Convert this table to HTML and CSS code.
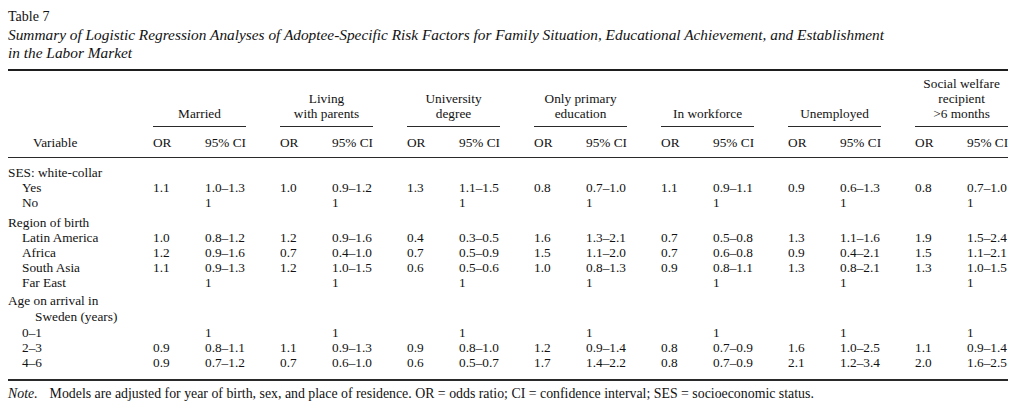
FILE: index.html
```html
<!DOCTYPE html>
<html lang="en">
<head>
<meta charset="utf-8">
<title>Table 7</title>
<link rel="stylesheet" href="styles.css">
</head>
<body>
<div class="page">
  <p class="tnum">Table 7</p>
  <p class="caption">Summary of Logistic Regression Analyses of Adoptee-Specific Risk Factors for Family Situation, Educational Achievement, and Establishment<br>in the Labor Market</p>
  <table class="data">
    <colgroup>
      <col class="c-var">
      <col class="c-or"><col class="c-ci">
      <col class="c-or"><col class="c-ci">
      <col class="c-or"><col class="c-ci">
      <col class="c-or"><col class="c-ci">
      <col class="c-or"><col class="c-ci">
      <col class="c-or"><col class="c-ci">
      <col class="c-or"><col class="c-ci-last">
    </colgroup>
    <thead>
      <tr class="groups">
        <th></th>
        <th colspan="2"><span class="grp-label">Married</span></th>
        <th colspan="2"><span class="grp-label">Living<br>with parents</span></th>
        <th colspan="2"><span class="grp-label">University<br>degree</span></th>
        <th colspan="2"><span class="grp-label">Only primary<br>education</span></th>
        <th colspan="2"><span class="grp-label">In workforce</span></th>
        <th colspan="2"><span class="grp-label">Unemployed</span></th>
        <th colspan="2" class="last"><span class="grp-label">Social welfare<br>recipient<br>&gt;6 months</span></th>
      </tr>
      <tr class="subhead">
        <th class="var-head">Variable</th>
        <th>OR</th><th class="ci-head">95% CI</th>
        <th>OR</th><th class="ci-head">95% CI</th>
        <th>OR</th><th class="ci-head">95% CI</th>
        <th>OR</th><th class="ci-head">95% CI</th>
        <th>OR</th><th class="ci-head">95% CI</th>
        <th>OR</th><th class="ci-head">95% CI</th>
        <th>OR</th><th class="ci-head last">95% CI</th>
      </tr>
    </thead>
    <tbody>
      <tr class="sect first"><td colspan="15">SES: white-collar</td></tr>
      <tr><td class="l1">Yes</td><td>1.1</td><td>1.0–1.3</td><td>1.0</td><td>0.9–1.2</td><td>1.3</td><td>1.1–1.5</td><td>0.8</td><td>0.7–1.0</td><td>1.1</td><td>0.9–1.1</td><td>0.9</td><td>0.6–1.3</td><td>0.8</td><td>0.7–1.0</td></tr>
      <tr><td class="l1">No</td><td></td><td>1</td><td></td><td>1</td><td></td><td>1</td><td></td><td>1</td><td></td><td>1</td><td></td><td>1</td><td></td><td>1</td></tr>
      <tr class="sect"><td colspan="15">Region of birth</td></tr>
      <tr><td class="l1">Latin America</td><td>1.0</td><td>0.8–1.2</td><td>1.2</td><td>0.9–1.6</td><td>0.4</td><td>0.3–0.5</td><td>1.6</td><td>1.3–2.1</td><td>0.7</td><td>0.5–0.8</td><td>1.3</td><td>1.1–1.6</td><td>1.9</td><td>1.5–2.4</td></tr>
      <tr><td class="l1">Africa</td><td>1.2</td><td>0.9–1.6</td><td>0.7</td><td>0.4–1.0</td><td>0.7</td><td>0.5–0.9</td><td>1.5</td><td>1.1–2.0</td><td>0.7</td><td>0.6–0.8</td><td>0.9</td><td>0.4–2.1</td><td>1.5</td><td>1.1–2.1</td></tr>
      <tr><td class="l1">South Asia</td><td>1.1</td><td>0.9–1.3</td><td>1.2</td><td>1.0–1.5</td><td>0.6</td><td>0.5–0.6</td><td>1.0</td><td>0.8–1.3</td><td>0.9</td><td>0.8–1.1</td><td>1.3</td><td>0.8–2.1</td><td>1.3</td><td>1.0–1.5</td></tr>
      <tr><td class="l1">Far East</td><td></td><td>1</td><td></td><td>1</td><td></td><td>1</td><td></td><td>1</td><td></td><td>1</td><td></td><td>1</td><td></td><td>1</td></tr>
      <tr class="sect age"><td colspan="15" class="hang">Age on arrival in<br>Sweden (years)</td></tr>
      <tr><td class="l1">0–1</td><td></td><td>1</td><td></td><td>1</td><td></td><td>1</td><td></td><td>1</td><td></td><td>1</td><td></td><td>1</td><td></td><td>1</td></tr>
      <tr><td class="l1">2–3</td><td>0.9</td><td>0.8–1.1</td><td>1.1</td><td>0.9–1.3</td><td>0.9</td><td>0.8–1.0</td><td>1.2</td><td>0.9–1.4</td><td>0.8</td><td>0.7–0.9</td><td>1.6</td><td>1.0–2.5</td><td>1.1</td><td>0.9–1.4</td></tr>
      <tr class="lastrow"><td class="l1">4–6</td><td>0.9</td><td>0.7–1.2</td><td>0.7</td><td>0.6–1.0</td><td>0.6</td><td>0.5–0.7</td><td>1.7</td><td>1.4–2.2</td><td>0.8</td><td>0.7–0.9</td><td>2.1</td><td>1.2–3.4</td><td>2.0</td><td>1.6–2.5</td></tr>
    </tbody>
  </table>
  <p class="note"><span class="note-lead">Note.</span>Models are adjusted for year of birth, sex, and place of residence. OR = odds ratio; CI = confidence interval; SES = socioeconomic status.</p>
</div>
</body>
</html>
```

FILE: styles.css
```css
* {
  box-sizing: border-box;
}

html, body {
  margin: 0;
  background: #ffffff;
}

body {
  color: #121212;
  font-family: "Liberation Serif", "Times New Roman", serif;
}

.page {
  padding: 8px 8px 0;
}

.tnum {
  margin: 0;
  font-size: 14px;
  line-height: 17px;
}

.caption {
  margin: 1px 0 8px;
  font-style: italic;
  font-size: 15.35px;
  line-height: 17.5px;
}

.data {
  border-collapse: collapse;
  table-layout: fixed;
  width: 1000px;
  font-size: 13.3px;
  border-top: 2px solid #1e1e1e;
  border-bottom: 2px solid #2a2a2a;
}

.c-var { width: 145px; }
.c-or { width: 52px; }
.c-ci { width: 75px; }
.c-ci-last { width: 41px; }

.data th,
.data td {
  padding: 0;
  font-weight: normal;
  text-align: left;
  line-height: 15px;
  white-space: nowrap;
  vertical-align: top;
}

.groups th {
  vertical-align: bottom;
  text-align: center;
  padding-top: 5px;
}

.grp-label {
  display: block;
  margin-right: 34px;
  padding-bottom: 5px;
  border-bottom: 1px solid #2a2a2a;
}

.groups .last .grp-label {
  margin-right: 0;
}

.subhead th {
  padding-top: 8px;
  padding-bottom: 7px;
  border-bottom: 1px solid #2a2a2a;
}

.subhead .var-head {
  padding-left: 25px;
}

.subhead .ci-head {
  text-align: right;
  padding-right: 34px;
}

.subhead .ci-head.last {
  padding-right: 0;
}

.sect td {
  padding-top: 5px;
}

.sect.first td {
  padding-top: 7px;
}

.sect.age td {
  padding-top: 3px;
  line-height: 16px;
}

.l1 {
  padding-left: 14px !important;
}

.hang {
  padding-left: 27px !important;
  text-indent: -27px;
}

.lastrow td {
  padding-bottom: 9px;
}

.note {
  margin: 5px 0 0;
  font-size: 13.85px;
  line-height: 15px;
}

.note-lead {
  font-style: italic;
  margin-right: 12px;
}
```
